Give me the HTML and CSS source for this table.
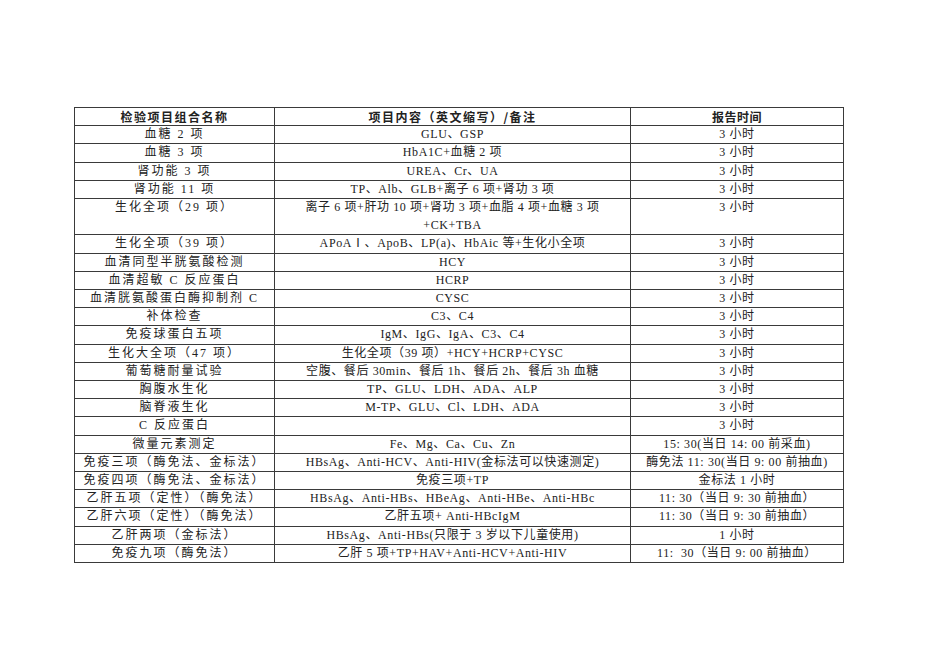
FILE: index.html
```html
<!DOCTYPE html>
<html lang="zh-CN">
<head>
<meta charset="utf-8">
<title>检验项目</title>
<link rel="stylesheet" href="styles.css">
</head>
<body>
<table class="sheet">
  <colgroup>
    <col class="c-name">
    <col class="c-content">
    <col class="c-time">
  </colgroup>
  <thead>
    <tr>
      <th class="name">检验项目组合名称</th>
      <th>项目内容（英文缩写）/备注</th>
      <th class="time">报告时间</th>
    </tr>
  </thead>
  <tbody>
    <tr><td class="name">血糖 2 项</td><td>GLU、GSP</td><td class="time">3 小时</td></tr>
    <tr><td class="name">血糖 3 项</td><td>HbA1C+血糖 2 项</td><td class="time">3 小时</td></tr>
    <tr><td class="name">肾功能 3 项</td><td>UREA、Cr、UA</td><td class="time">3 小时</td></tr>
    <tr><td class="name">肾功能 11 项</td><td>TP、Alb、GLB+离子 6 项+肾功 3 项</td><td class="time">3 小时</td></tr>
    <tr class="tall"><td class="name">生化全项（29 项）</td><td>离子 6 项+肝功 10 项+肾功 3 项+血脂 4 项+血糖 3 项<br>+CK+TBA</td><td class="time">3 小时</td></tr>
    <tr><td class="name">生化全项（39 项）</td><td>APoAⅠ、ApoB、LP(a)、HbAic 等+生化小全项</td><td class="time">3 小时</td></tr>
    <tr><td class="name">血清同型半胱氨酸检测</td><td>HCY</td><td class="time">3 小时</td></tr>
    <tr><td class="name">血清超敏 C 反应蛋白</td><td>HCRP</td><td class="time">3 小时</td></tr>
    <tr><td class="name">血清胱氨酸蛋白酶抑制剂 C</td><td>CYSC</td><td class="time">3 小时</td></tr>
    <tr><td class="name">补体检查</td><td>C3、C4</td><td class="time">3 小时</td></tr>
    <tr><td class="name">免疫球蛋白五项</td><td>IgM、IgG、IgA、C3、C4</td><td class="time">3 小时</td></tr>
    <tr><td class="name">生化大全项（47 项）</td><td>生化全项（39 项）+HCY+HCRP+CYSC</td><td class="time">3 小时</td></tr>
    <tr><td class="name">葡萄糖耐量试验</td><td>空腹、餐后 30min、餐后 1h、餐后 2h、餐后 3h 血糖</td><td class="time">3 小时</td></tr>
    <tr><td class="name">胸腹水生化</td><td>TP、GLU、LDH、ADA、ALP</td><td class="time">3 小时</td></tr>
    <tr><td class="name">脑脊液生化</td><td>M-TP、GLU、Cl、LDH、ADA</td><td class="time">3 小时</td></tr>
    <tr><td class="name">C 反应蛋白</td><td></td><td class="time">3 小时</td></tr>
    <tr><td class="name">微量元素测定</td><td>Fe、Mg、Ca、Cu、Zn</td><td class="time">15: 30(当日 14: 00 前采血)</td></tr>
    <tr><td class="name">免疫三项（酶免法、金标法）</td><td>HBsAg、Anti-HCV、Anti-HIV(金标法可以快速测定)</td><td class="time">酶免法 11: 30(当日 9: 00 前抽血)</td></tr>
    <tr><td class="name">免疫四项（酶免法、金标法）</td><td>免疫三项+TP</td><td class="time">金标法 1 小时</td></tr>
    <tr><td class="name">乙肝五项（定性）（酶免法）</td><td>HBsAg、Anti-HBs、HBeAg、Anti-HBe、Anti-HBc</td><td class="time">11: 30（当日 9: 30 前抽血）</td></tr>
    <tr><td class="name">乙肝六项（定性）（酶免法）</td><td>乙肝五项+ Anti-HBcIgM</td><td class="time">11: 30（当日 9: 30 前抽血）</td></tr>
    <tr><td class="name">乙肝两项（金标法）</td><td>HBsAg、Anti-HBs(只限于 3 岁以下儿童使用)</td><td class="time">1 小时</td></tr>
    <tr><td class="name">免疫九项（酶免法）</td><td>乙肝 5 项+TP+HAV+Anti-HCV+Anti-HIV</td><td class="time">11:  30（当日 9: 00 前抽血）</td></tr>
  </tbody>
</table>
</body>
</html>
```

FILE: styles.css
```css
html, body {
  margin: 0;
  padding: 0;
  background: #ffffff;
}

body {
  padding: 107px 0 0 74px;
}

.sheet {
  border-collapse: collapse;
  table-layout: fixed;
  width: 770px;
  color: #222222;
  font-family: "Liberation Serif", "Noto Sans CJK SC", serif;
  font-size: 12px;
}

.c-name { width: 200px; }
.c-content { width: 356px; }
.c-time { width: 213px; }

.sheet th,
.sheet td {
  border: 1px solid #3a3a3a;
  padding: 0;
  text-align: center;
  vertical-align: top;
  height: 17.2px;
  line-height: 17.2px;
  white-space: pre;
  overflow: hidden;
}

.sheet td {
  letter-spacing: 0.6px;
}

.sheet th {
  font-family: "Noto Sans CJK SC", sans-serif;
  font-weight: 700;
  font-size: 12px;
  letter-spacing: 1.5px;
}

.sheet th.time {
  letter-spacing: 0.5px;
}

.sheet td.name {
  letter-spacing: 2px;
}

.sheet td.time {
  letter-spacing: 0.6px;
}

.sheet tr.tall td {
  height: 35.4px;
}

.sheet tr.tall td:nth-child(2) {
  line-height: 17.7px;
}
```
